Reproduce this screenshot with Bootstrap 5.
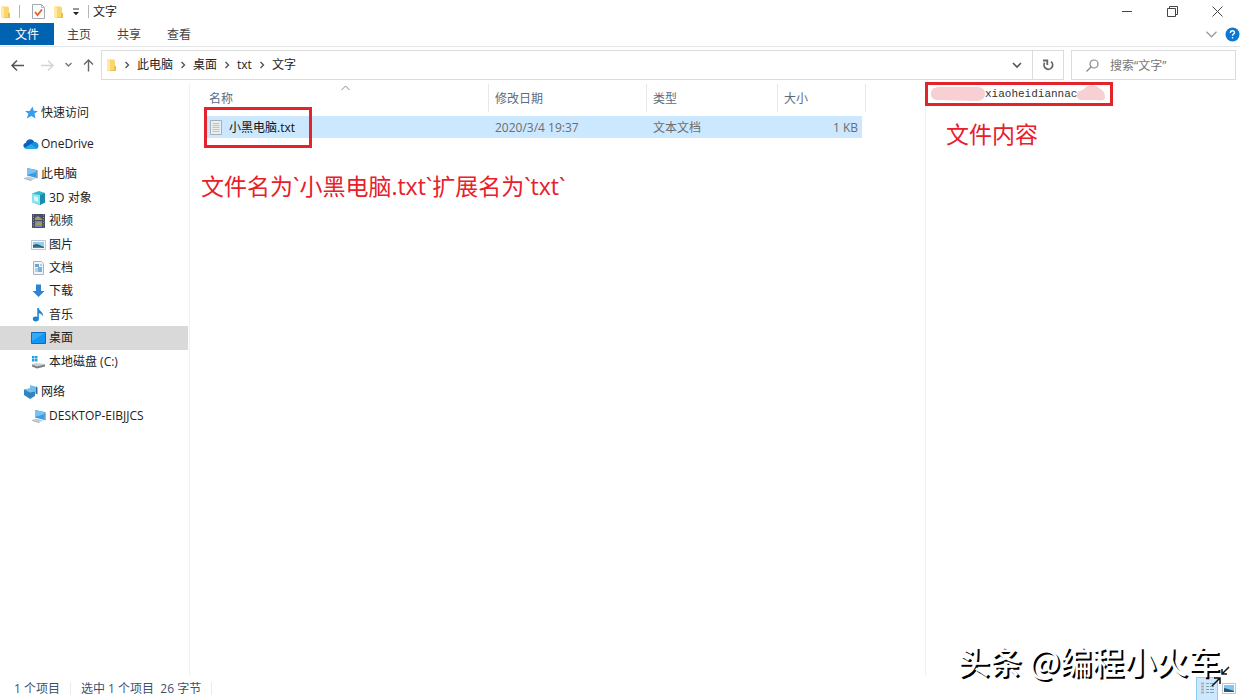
<!DOCTYPE html>
<html lang="zh-CN">
<head>
<meta charset="utf-8">
<meta name="viewport" content="width=device-width, initial-scale=1">
<title>文字</title>
<link rel="stylesheet" href="https://cdn.jsdelivr.net/npm/bootstrap@5.3.0/dist/css/bootstrap.min.css">
<style>
  body { font: 12px/16px "Open Sans", "Noto Sans CJK SC", sans-serif; color: #222; background: #fff; }
  svg { display: block; flex: none; }
  button { border: 0; background: none; padding: 0; color: inherit; }
  a { color: inherit; text-decoration: none; }

  .title-bar { height: 23px; }
  .rule { width: 1px; height: 13px; background: #b5b5b5; }
  .win-btn { width: 45px; height: 23px; }

  .ribbon { height: 24px; border-bottom: 1px solid #e4e5e6; }
  .ribbon-tab { width: 50px; height: 22px; padding-top: 1px; color: #444; }
  .ribbon-tab.file { width: 54px; background: #0063b1; color: #fff; }

  .address-row { height: 36px; padding: 3px 4px 3px 10px; gap: 7px; }
  .nav-btns { width: 84px; }
  .box { height: 30px; border: 1px solid #dcdcdc; }
  .crumbs { gap: 7px; margin: 0; padding: 0 0 0 4px; list-style: none; }
  .crumbs li { display: flex; align-items: center; gap: 7px; }
  .drop-btn { width: 30px; }
  .reload-btn { width: 31px; border-left: 1px solid #dcdcdc; }
  .search-box { width: 165px; padding-left: 14px; gap: 11px; }
  .search-box input { border: 0; outline: 0; padding: 1px 0 0; min-width: 0; background: none; }
  .search-box input::placeholder { color: #767676; opacity: 1; }

  .side { width: 190px; padding-top: 17px; gap: 7px; border-right: 1px solid #f1f1f1; }
  .tree { display: grid; grid-auto-rows: 1fr; height: 24px; width: 188px; }
  .tree.pc { height: 211px; }
  .tree.net { height: 47px; }
  .tree a { display: flex; align-items: center; gap: 2px; padding: 1px 0 0 23px; white-space: nowrap; }
  .tree a.child { padding-left: 31px; }
  .tree a.active { background: #d9d9d9; }

  .files { padding: 1px 0 0 14px; }
  .file-table { width: 662px; table-layout: fixed; border-collapse: separate; border-spacing: 0; }
  .file-table th { height: 28px; padding: 2px 6px 0; font-weight: 400; color: #5a6b80; border-right: 1px solid #e8e8e8; position: relative; }
  .file-table th:first-child { padding-left: 5px; }
  .file-table td { height: 22px; padding: 1px 6px 0; color: #6d6d6d; background: #cce8ff; position: relative; }
  .file-table td.void, .file-table tr.space td { background: none; padding: 0; }
  .file-table tr.space td { height: 4px; }
  .sort { position: absolute; left: 137px; top: 1px; }
  .file-name { gap: 6px; color: #111; }
  .frame { border: 3px solid #e3242b; }
  .name-frame { position: absolute; left: 0; top: -9px; width: 108px; height: 41px; }
  .remark { font-size: 23px; line-height: 32px; color: #e8202a; margin: 0; }
  .files .remark { margin: 32px 0 0 -3px; }

  .preview { width: 315px; border-left: 1px solid #f1f1f1; }
  .content-frame { width: 188px; height: 24px; margin-left: -1px; margin-top: -1px; padding-left: 2px; font: 11px/16px "Liberation Mono", monospace; color: #333; }
  .preview .remark { margin: 12px 0 0 20px; }

  .status { height: 24px; padding: 1px 4px 0 14px; gap: 10px; color: #3d5070; }
  .status .rule { background: #eaeaea; }
  .view-btn { width: 22px; height: 24px; }
  .view-btn.on { background: #cce8ff; border: 1px solid #8ccdf2; }
  .watermark { position: absolute; right: 20px; bottom: 20px; font-size: 32px; line-height: 40px; font-weight: 500; font-family: "Noto Sans CJK SC", sans-serif; color: #fff; text-shadow: 2px 2px 0 #000; white-space: nowrap; }
  .resize-mark { position: absolute; right: 9px; bottom: 12px; }
</style>
</head>
<body>
<svg width="0" height="0" class="position-absolute" aria-hidden="true">
  <defs>
    <symbol id="folder" viewBox="0 0 11 14"><path d="M1 1.500h7l1 1V13H1z" fill="#fbd66f"/><path d="M1 1.500l3 1.200V13.500L1 13z" fill="#ffe9a6"/><path d="M8 8h2v5H4v-.8h4z" fill="#eebd48"/></symbol>
    <symbol id="sep" viewBox="0 0 6 8"><path d="M1.500 1l3 3-3 3" fill="none" stroke="#555" stroke-width="1.400"/></symbol>
    <symbol id="computer" viewBox="0 0 16 16"><path d="M4 2l9.500 2v8L4 9.500z" fill="#3d9be0"/><path d="M4 2l9.500 2v2L4 9z" fill="#74c4f5"/><path d="M13.500 4l1 .4v8l-1-.4z" fill="#3477a8"/><path d="M1 12l4-1.500 8 2-4.500 1.500z" fill="#c6ced5"/><path d="M1 12l7.500 2v1L1 12.800z" fill="#929da8"/></symbol>
  </defs>
</svg>

<div class="d-flex flex-column vh-100 position-relative overflow-hidden">
  <header>
    <div class="title-bar d-flex align-items-center">
      <svg width="11" height="14" class="me-1"><use href="#folder"/></svg>
      <span class="rule ms-1"></span>
      <button class="ms-2 ps-1" aria-label="属性"><svg width="13" height="15" viewBox="0 0 13 15"><path d="M.5.5h9l3 3v11H.5z" fill="#fbfbfb" stroke="#a3abb2"/><path d="M9.500.5v3h3" fill="none" stroke="#b5bbc1"/><path d="M3 8l2.500 3L10 5.500" fill="none" stroke="#df6032" stroke-width="1.800"/></svg></button>
      <button class="ms-2" aria-label="新建文件夹"><svg width="11" height="14"><use href="#folder"/></svg></button>
      <button class="ms-2" aria-label="自定义"><svg width="8" height="8" viewBox="0 0 8 8"><path d="M1 1h6" stroke="#333"/><path d="M1 4h6L4 7.200z" fill="#222"/></svg></button>
      <span class="rule ms-2 me-1"></span>
      <span>文字</span>
      <div class="ms-auto d-flex">
        <button class="win-btn d-flex align-items-center justify-content-center" aria-label="最小化"><svg width="11" height="11"><path d="M0 5.500h10" stroke="#444"/></svg></button>
        <button class="win-btn d-flex align-items-center justify-content-center" aria-label="还原"><svg width="11" height="11" fill="none" stroke="#444"><path d="M.5 2.500h8v8h-8zM2.500 2.500v-2h8v8h-2"/></svg></button>
        <button class="win-btn d-flex align-items-center justify-content-center" aria-label="关闭"><svg width="11" height="11"><path d="M.5.5l10 10M10.500.5l-10 10" stroke="#444"/></svg></button>
      </div>
    </div>
    <div class="ribbon d-flex">
      <button class="ribbon-tab file">文件</button>
      <button class="ribbon-tab">主页</button>
      <button class="ribbon-tab">共享</button>
      <button class="ribbon-tab">查看</button>
      <div class="ms-auto d-flex align-items-center gap-2">
        <button aria-label="展开功能区"><svg width="11" height="7" fill="none" stroke="#9a9a9a" stroke-width="1.300"><path d="M.5.8l5 5 5-5"/></svg></button>
        <button aria-label="帮助"><svg width="15" height="15"><circle cx="7.500" cy="7.500" r="7" fill="#0a78d4"/><path d="M5.300 5.900c.1-3 4.400-2.700 4.200-.3C9.400 7 7.500 7.200 7.500 8.800M7.500 10v1.500" fill="none" stroke="#fff" stroke-width="1.300"/></svg></button>
      </div>
    </div>
    <div class="address-row d-flex align-items-center">
      <div class="nav-btns d-flex align-items-center justify-content-between">
        <button aria-label="后退"><svg width="15" height="13" fill="none" stroke="#555" stroke-width="1.500"><path d="M14 6.500H2M7 1.500l-5 5 5 5"/></svg></button>
        <button class="ms-1" aria-label="前进"><svg width="15" height="13" fill="none" stroke="#d2d2d2" stroke-width="1.300"><path d="M1 6.500h12M8 1.500l5 5-5 5"/></svg></button>
        <button aria-label="最近位置"><svg width="7" height="6" fill="none" stroke="#777" stroke-width="1.400"><path d="M.5 1l3 3 3-3"/></svg></button>
        <button aria-label="上移"><svg width="11" height="14" fill="none" stroke="#666" stroke-width="1.400"><path d="M5.500 13.500V2M1 6.500L5.500 2 10 6.500"/></svg></button>
      </div>
      <div class="box d-flex align-items-center flex-grow-1">
        <ol class="crumbs d-flex align-items-center">
          <li><svg width="11" height="14"><use href="#folder"/></svg></li>
          <li><svg width="6" height="8"><use href="#sep"/></svg><a href="#">此电脑</a></li>
          <li><svg width="6" height="8"><use href="#sep"/></svg><a href="#">桌面</a></li>
          <li><svg width="6" height="8"><use href="#sep"/></svg><a href="#">txt</a></li>
          <li><svg width="6" height="8"><use href="#sep"/></svg><a href="#">文字</a></li>
        </ol>
        <button class="drop-btn ms-auto h-100 d-flex align-items-center justify-content-center" aria-label="历史记录"><svg width="10" height="7" fill="none" stroke="#555" stroke-width="1.600"><path d="M1 1l4 4 4-4"/></svg></button>
        <button class="reload-btn h-100 d-flex align-items-center justify-content-center" aria-label="刷新"><svg width="12" height="12" fill="none" stroke="#666" stroke-width="1.800"><path d="M9 2.600A4.300 4.300 0 1 1 2.600 3.800M1 1.500h4.300V6"/></svg></button>
      </div>
      <label class="search-box box d-flex align-items-center">
        <svg width="13" height="13" fill="none" stroke="#888" stroke-width="1.200"><circle cx="8" cy="5" r="4"/><path d="M5 8l-4.500 4.500"/></svg>
        <input type="search" placeholder="搜索“文字”" aria-label="搜索">
      </label>
    </div>
  </header>

  <div class="d-flex flex-grow-1">
    <nav class="side d-flex flex-column flex-shrink-0">
      <div class="tree"><a href="#"><svg width="16" height="16"><path d="M9.500 1.500l1.200 4.200 4.300.2-3.500 2.700 1 4.900-4.100-2.600-4.600 2.600 1.600-4.700L2 6h4.700z" fill="#3a9cea"/></svg>快速访问</a></div>
      <div class="tree"><a href="#"><svg width="16" height="16"><path d="M2.500 12.500C-.5 11-.2 7.500 2.700 7 4 2.500 9.500 2 11.500 6.300c3.500 0 5 3.700 2.700 6.200z" fill="#0a64bd"/><path d="M8 8l3.500-2c3.500.3 5.200 3.800 2.700 6.500z" fill="#1490df"/><path d="M1.500 12L8 8l6.200 4.500q-.5.500-1.500.5H4q-1.500 0-2.500-1z" fill="#2ca8ed"/></svg>OneDrive</a></div>
      <div class="tree pc">
        <a href="#"><svg width="16" height="16"><use href="#computer"/></svg>此电脑</a>
        <a href="#" class="child"><svg width="16" height="16"><path d="M1 3.500L8 1l6 2v9.500L8 15l-7-3z" fill="#35b6d0"/><path d="M1 3.500L9 5v10l-8-3z" fill="#86e2ee"/><path d="M9 5l5-2v9.500L9 15z" fill="#168fae"/><path d="M3 6l4 1v5l-4-1.500z" fill="#d3f7fa"/></svg>3D 对象</a>
        <a href="#" class="child"><svg width="16" height="16"><path d="M1 1h13v14H1z" fill="#475060"/><path d="M4 2h7v5H4z" fill="#394fa0"/><path d="M4 8h7v6H4z" fill="#6a8ac7"/><path d="M4 5l3-2 4 3v1H4zM4 12l3-3 4 1v2z" fill="#b09855"/><path d="M2.500 1.500v13M12.500 1.500v13" stroke="#99a" stroke-width="1" stroke-dasharray="1 1.500"/></svg>视频</a>
        <a href="#" class="child"><svg width="16" height="16"><path d="M.5 3.500h14v9H.5z" fill="#f5f9fb" stroke="#bdc9d2"/><path d="M2 5h11v6H2z" fill="#8fcdf4"/><path d="M2 8l4-1 7 3v1H2z" fill="#315e79"/><path d="M2 10l5-.5 6 1.500H2z" fill="#4990a9"/></svg>图片</a>
        <a href="#" class="child"><svg width="16" height="16"><path d="M2.500 1.500h8l2 2v11h-10z" fill="#eef4f8" stroke="#aab5bd"/><path d="M4 4h4v3H4z" fill="#65a7db"/><path d="M7 7h4v5H7z" fill="#75b2df"/><path d="M4 9h3M4 11h3M9 5h2" stroke="#93a5b3"/></svg>文档</a>
        <a href="#" class="child"><svg width="16" height="16"><path d="M5 1.500h5V8h3.500L7.500 14 1.500 8H5z" fill="#3182d2"/></svg>下载</a>
        <a href="#" class="child"><svg width="16" height="16"><ellipse cx="4.800" cy="12" rx="3" ry="2.400" fill="#1784da"/><path d="M6.300 12V1h1.500c.3 3.500 5.500 4.200 3.700 8.500-.3-2-1.800-3-3.700-3.200V12z" fill="#1784da"/></svg>音乐</a>
        <a href="#" class="child active"><svg width="16" height="16"><path d="M.5 2.500h14v11H.5z" fill="#1296f3" stroke="#086fbd"/><path d="M1 3h13L1 11z" fill="#36aaf8"/></svg>桌面</a>
        <a href="#" class="child"><svg width="16" height="16"><path d="M1 2h2.500v2.500H1zM4 2h2.500v2.500H4zM1 5h2.500v2.500H1zM4 5h2.500v2.500H4z" fill="#16a5e5"/><path d="M1 10.500l3-1.500 10 1-2 3-7 .5z" fill="#cbd0d3"/><path d="M1 10.500l5 2 8-2v2l-8 2-5-2z" fill="#777f84"/></svg>本地磁盘 (C:)</a>
      </div>
      <div class="tree net">
        <a href="#"><svg width="16" height="16"><path d="M7 1l7 2v7l-7-1z" fill="#73bced"/><path d="M13 2.500l1.500 1v7L13 9.500z" fill="#306e9f"/><path d="M1 5.500l6-1 5 3.500v4l-5 3-6-4z" fill="#3185bf"/><path d="M1 5.500l6 3 5-1-5-3z" fill="#78c2ed"/></svg>网络</a>
        <a href="#" class="child"><svg width="16" height="16"><use href="#computer"/></svg>DESKTOP-EIBJJCS</a>
      </div>
    </nav>

    <main class="files flex-grow-1">
      <table class="file-table">
        <colgroup><col style="width:285px"><col style="width:158px"><col style="width:131px"><col style="width:84px"><col style="width:4px"></colgroup>
        <thead><tr><th>名称<svg class="sort" width="9" height="6" fill="none" stroke="#8a8a8a"><path d="M.5 5l4-4 4 4"/></svg></th><th>修改日期</th><th>类型</th><th colspan="2">大小</th></tr></thead>
        <tbody>
          <tr class="space"><td colspan="5"></td></tr>
          <tr>
            <td><div class="file-name d-flex align-items-center"><svg width="13" height="16"><path d="M.5.5h11v14H.5z" fill="#eceff0" stroke="#a7b0b5"/><path d="M2.500 3.500h7M2.500 5.500h7M2.500 7.500h7M2.500 9.500h7M2.500 11.500h7" stroke="#c6c2b6"/></svg>小黑电脑.txt</div><div class="frame name-frame"></div></td>
            <td>2020/3/4 19:37</td><td>文本文档</td><td class="text-end pe-1">1 KB</td><td class="void"></td>
          </tr>
        </tbody>
      </table>
      <p class="remark">文件名为`小黑电脑.txt`扩展名为`txt`</p>
    </main>

    <aside class="preview flex-shrink-0">
      <div class="frame content-frame d-flex align-items-center">
        <svg width="55" height="18"><path d="M1 9c0-6 4-7 10-7h36c5 0 8 2 8 7s-4 7-9 7l-37-1C4 15 1 13 1 9z" fill="#f8cfd2"/></svg>
        <span>xiaoheidiannac</span>
        <svg width="29" height="18"><path d="M0 9c0-4 5-2 8-6 5-4 10-3 14 0 4 2 6 5 6 9 0 5-6 3-10 3H5c-4 0-5-2-5-6z" fill="#f8cfd2"/></svg>
      </div>
      <p class="remark">文件内容</p>
    </aside>
  </div>

  <footer class="status d-flex align-items-center">
    <span>1 个项目</span><span class="rule"></span><span>选中 1 个项目&nbsp; 26 字节</span><span class="rule"></span>
    <div class="ms-auto d-flex align-items-center">
      <button class="view-btn on d-flex align-items-center justify-content-center" aria-label="详细信息"><svg width="15" height="15"><path d="M1 2.500h3M1 5.500h3M1 8.500h3M1 11.500h3" stroke="#c0aaa0" stroke-width="2"/><path d="M6 2.500h3m1 0h4M6 5.500h3m1 0h4M6 8.500h3m1 0h4M6 11.500h3m1 0h4" stroke="#7f9eae"/></svg></button>
      <button class="ms-1" aria-label="大缩略图"><svg width="14" height="11"><path d="M.5.5h13v10H.5z" fill="#fff" stroke="#b9c6d0"/><path d="M2 2h10v7H2z" fill="#82c6f3"/><path d="M2 5l4 1 6 2v1H2z" fill="#28567a"/></svg></button>
    </div>
  </footer>
  <div class="watermark">头条 @编程小火车</div>
  <svg class="resize-mark" width="22" height="24" fill="none" stroke="#111" stroke-width="1.500"><path d="M20 3l-7 7M13 5v5h5M3 22l8-8M5 14h6v6"/></svg>
</div>
<script src="https://cdn.jsdelivr.net/npm/bootstrap@5.3.0/dist/js/bootstrap.bundle.min.js"></script>
</body>
</html>
